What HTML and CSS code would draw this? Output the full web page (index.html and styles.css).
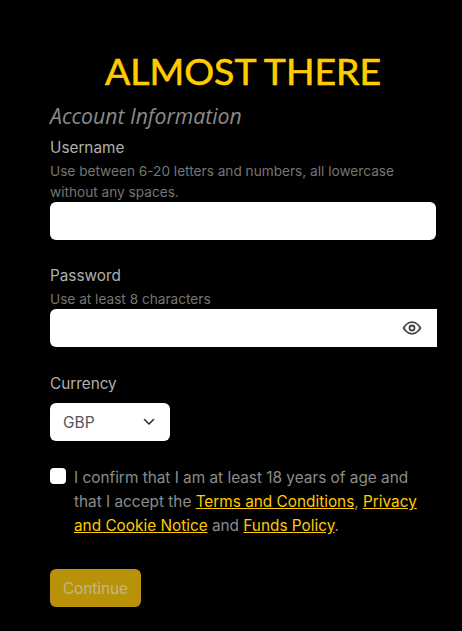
FILE: index.html
```html
<!doctype html>
<html>
<head>
<meta charset="utf-8">
<title>Almost there</title>
<link rel="stylesheet" href="styles.css">
</head>

<body>
<form class="signup">
	<h1 class="title">ALMOST THERE</h1>
	<h2 class="section">Account Information</h2>

	<div class="field field-user">
		<label class="label">Username</label>
		<p class="help">Use between 6-20 letters and numbers, all lowercase without any spaces.</p>
		<div class="input"></div>
	</div>

	<div class="field field-pass">
		<label class="label">Password</label>
		<p class="help">Use at least 8 characters</p>
		<div class="input input-pass">
			<svg class="eye" width="20" height="20" viewBox="0 0 24 24" fill="none" stroke="#444" stroke-width="2.2" stroke-linecap="round" stroke-linejoin="round"><path d="M2 12s3.600-7 10-7 10 7 10 7-3.600 7-10 7-10-7-10-7z"/><circle cx="12" cy="12" r="3"/></svg>
		</div>
	</div>

	<div class="field field-currency">
		<label class="label">Currency</label>
		<div class="select">
			<span>GBP</span>
			<svg width="12" height="8" viewBox="0 0 12 8" fill="none" stroke="#333" stroke-width="1.6" stroke-linecap="round" stroke-linejoin="round"><path d="M1.5 1.5 6 6l4.500-4.500"/></svg>
		</div>
	</div>

	<div class="confirm">
		<span class="check"></span>
		<p>I confirm that I am at least 18 years of age and that I accept the <a href="#">Terms and Conditions</a>, <a href="#">Privacy and Cookie Notice</a> and <a href="#">Funds Policy</a>.</p>
	</div>

	<button class="continue" type="button">Continue</button>
</form>
</body>
</html>
```

FILE: styles.css
```css
*{margin:0; padding:0; box-sizing:border-box;}
html,body{height:631px; overflow:hidden;}
body{background:#000; font-family:Inter,"Liberation Sans",sans-serif; color:#a6a6a6;}
.signup{width:387px; margin-left:50px; padding-top:48px;}
.title{width:386px; font-family:Lato,"Liberation Sans",sans-serif; font-weight:400; font-size:37.4px; line-height:46px; text-align:center; color:#ffcc00; white-space:nowrap; -webkit-text-stroke:0.6px #ffcc00;}
.section{margin-top:8px; font-family:"Open Sans","Liberation Sans",sans-serif; font-style:italic; font-weight:400; font-size:21.2px; line-height:27px; color:#8a8a8a;}
.label{display:block; font-size:15.3px; line-height:24px; color:#b0b0b0;}
.help{margin-top:1px; font-size:13.65px; line-height:20.5px; color:#757575;}
.field-user{margin-top:7px; width:386px;}
.field-pass{margin-top:24px;}
.field-pass .help{line-height:20px;}
.field-currency{margin-top:25px;}
.input{height:38px; background:#fff; border-radius:6px;}
.input-pass{display:flex; align-items:center; justify-content:flex-end; padding-right:15px; border-radius:6px 0 0 6px;}
.select{display:flex; align-items:center; justify-content:space-between; width:120px; height:38px; margin-top:7px; padding:0 15px 0 13px; background:#fff; border-radius:6px; font-size:15.5px; color:#555;}
.confirm{display:flex; gap:8px; margin-top:25px; width:372px;}
.confirm p{font-size:15.35px; line-height:24px; color:#8c8c8c;}
.confirm a{color:#ffcc00;}
.check{flex:none; width:16px; height:16px; margin-top:2px; background:#fff; border-radius:4px;}
.continue{display:block; width:91px; height:38px; margin-top:31px; background:#b8930a; border:0; border-radius:6px; font-family:inherit; font-size:15.3px; color:#c4b78a;}
```
